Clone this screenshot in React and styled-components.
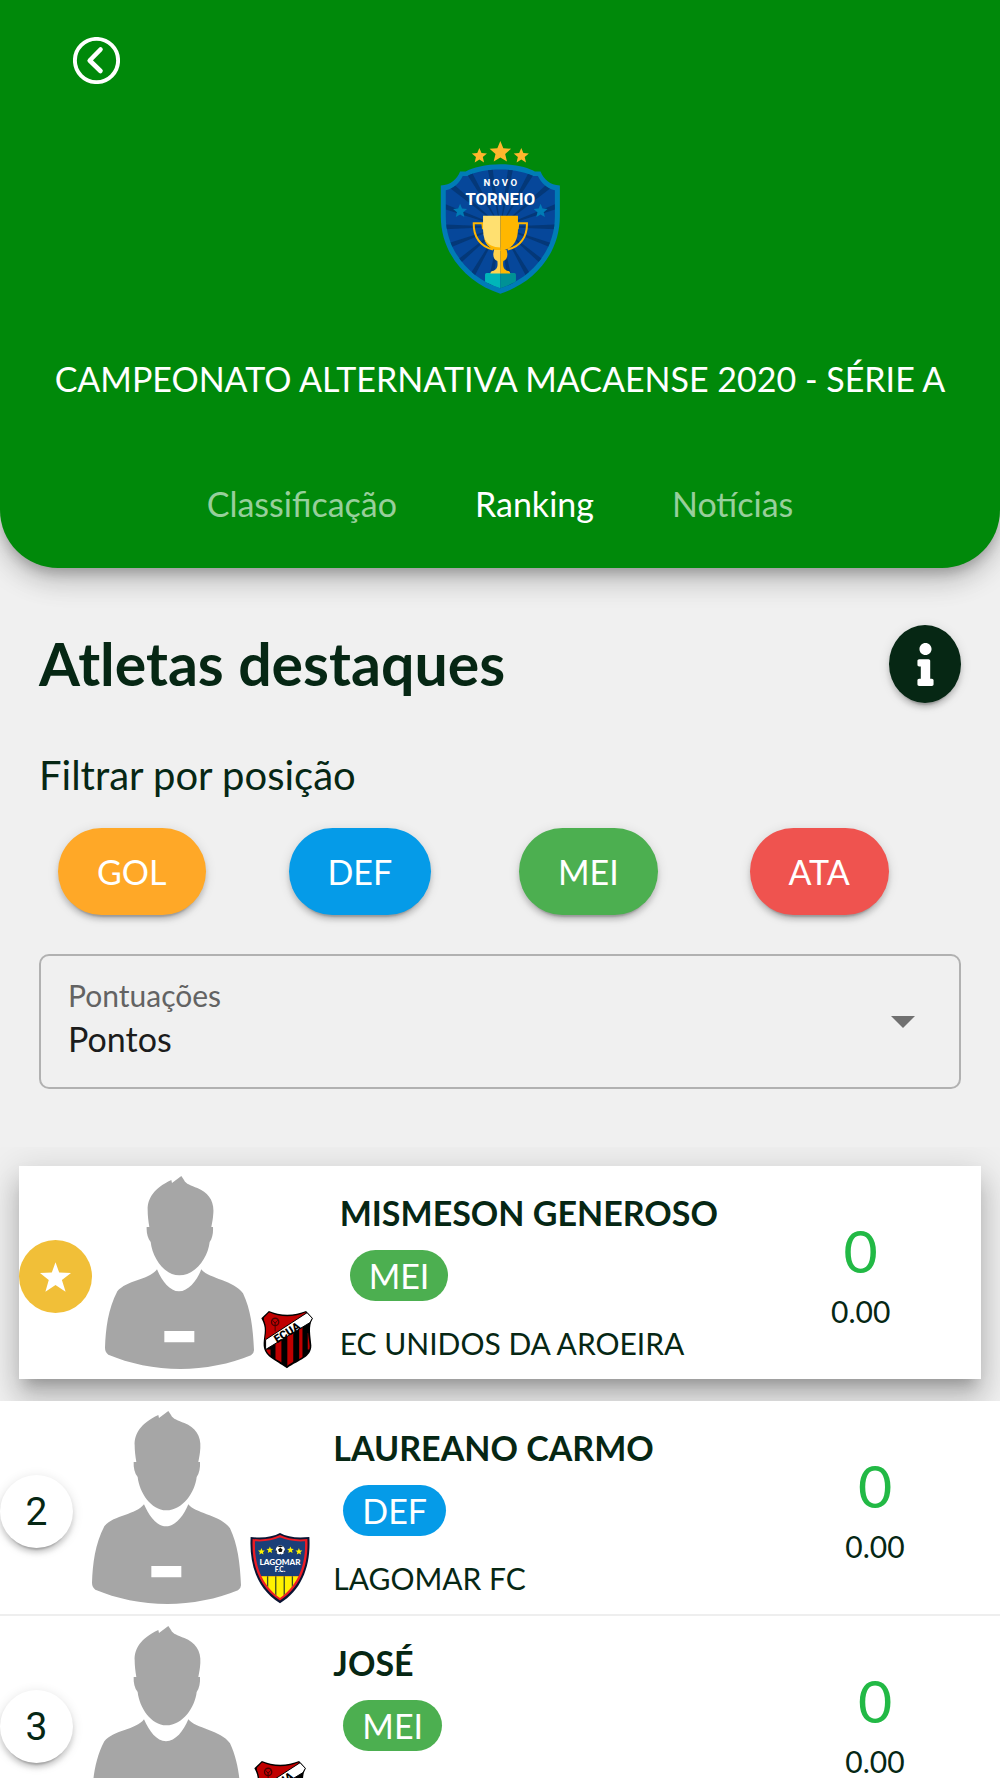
import { useState } from "react";
import styled, { createGlobalStyle } from "styled-components";
import { FaInfo } from "react-icons/fa";

const GlobalStyle = createGlobalStyle`
    * {
        box-sizing: border-box;
    }

    body {
        margin: 0;
        background-color: #f0f0f0;
        color: #062714;
        font-family: Lato, "Open Sans", sans-serif;
        overflow-x: hidden;
    }

    button, select {
        font-family: inherit;
    }
`

const positionColors = {
    GOL: "#ffa827",
    DEF: "#059be8",
    MEI: "#4caf50",
    ATA: "#ef534f",
};

const Header = styled.header`
    display: flex;
    flex-direction: column;
    align-items: center;
    padding: 37px 24px 43px;
    background-color: #00890a;
    color: #fff;
    border-radius: 0 0 58px 58px;
    box-shadow: 0 7px 12px -2px rgba(0, 0, 0, .2), 0 15px 24px rgba(0, 0, 0, .14), 0 2px 44px rgba(0, 0, 0, .12);
`

const BackButton = styled.button`
    align-self: flex-start;
    display: flex;
    margin: 0 0 57px 49px;
    padding: 0;
    border: 0;
    background: none;
    color: inherit;
    cursor: pointer;
`

const Championship = styled.h1`
    margin: 64px 0 83px;
    font-size: 34px;
    line-height: 42px;
    font-weight: normal;
    text-align: center;
`

const Tabs = styled.nav`
    display: flex;
    gap: 78px;
`

const Tab = styled.a`
    font-size: 34px;
    line-height: 42px;
    text-decoration: none;
    color: ${props => props.$active ? "#fff" : "rgba(255, 255, 255, .6)"};
`

const Filters = styled.section`
    padding: 57px 39px 58px;
`

const TitleRow = styled.div`
    display: flex;
    align-items: center;
    justify-content: space-between;
`

const Title = styled.h2`
    margin: 0;
    font-size: 59px;
    line-height: 78px;
`

const InfoButton = styled.button`
    display: flex;
    align-items: center;
    justify-content: center;
    width: 72px;
    height: 78px;
    padding: 0;
    border: 0;
    border-radius: 50%;
    background-color: #062714;
    color: #fff;
    box-shadow: 0 7px 2px -5px rgba(0, 0, 0, .2), 0 5px 5px rgba(0, 0, 0, .14), 0 2px 12px rgba(0, 0, 0, .12);
    cursor: pointer;
`

const Subtitle = styled.h3`
    margin: 48px 0 28px;
    font-size: 40px;
    line-height: 49px;
    font-weight: normal;
`

const Positions = styled.div`
    display: grid;
    grid-template-columns: repeat(4, 1fr);
    justify-items: start;
`

const PositionButton = styled.button`
    height: 87px;
    margin-left: 19px;
    padding: 0 39px;
    border: 0;
    border-radius: 44px;
    background-color: ${props => positionColors[props.$position]};
    color: #fff;
    font-size: 34px;
    box-shadow: 0 7px 2px -5px rgba(0, 0, 0, .2), 0 5px 5px rgba(0, 0, 0, .14), 0 2px 12px rgba(0, 0, 0, .12);
    cursor: pointer;
`

const SelectBox = styled.div`
    display: grid;
    grid-template-columns: 1fr auto;
    align-items: center;
    height: 135px;
    margin-top: 39px;
    padding: 0 44px 0 27px;
    border: 2px solid #b1b1b1;
    border-radius: 10px;
`

const SelectField = styled.div`
    padding-bottom: 2px;
`

const SelectLabel = styled.label`
    display: block;
    color: #636363;
    font-size: 30px;
    line-height: 36px;
`

const Select = styled.select`
    width: 100%;
    height: 52px;
    padding: 0;
    border: 0;
    outline: 0;
    appearance: none;
    background: none;
    color: #1c1c1c;
    font-size: 34px;
`

const Ranking = styled.ol`
    margin: 0;
    padding: 19px 0 0;
    list-style: none;
    overflow: hidden;
`

const Row = styled.li`
    display: grid;
    grid-template-columns: 4fr 5fr 3fr;
    margin: ${props => props.$first ? "0 19px 22px" : "0"};
    background-color: #fff;
    border-bottom: ${props => props.$first ? "0" : "2px solid #eee"};
    box-shadow: ${props => props.$first
        ? "0 12px 12px -7px rgba(0, 0, 0, .2), 0 20px 24px 2px rgba(0, 0, 0, .14), 0 7px 34px 5px rgba(0, 0, 0, .12)"
        : "none"};
    position: relative;
    z-index: ${props => props.$first ? 0 : 1};
`

const Player = styled.div`
    display: grid;
    grid-template-columns: minmax(0, 1fr) auto minmax(0, 1fr);
    align-items: center;
    padding: 10px 0;
`

const Rank = styled.span`
    display: flex;
    align-items: center;
    justify-content: center;
    width: 73px;
    height: 73px;
    margin-top: 8px;
    border-radius: 50%;
    background-color: ${props => props.$first ? "#f1bf38" : "#fff"};
    box-shadow: ${props => props.$first
        ? "none"
        : "0 7px 2px -5px rgba(0, 0, 0, .2), 0 5px 5px rgba(0, 0, 0, .14), 0 2px 12px rgba(0, 0, 0, .12)"};
    font-family: Roboto, sans-serif;
    font-size: 39px;
`

const Crest = styled.div`
    display: flex;
    justify-content: center;
    justify-self: end;
    align-self: end;
    width: 60px;
    margin-right: 23px;
`

const Info = styled.div`
    display: flex;
    flex-direction: column;
    align-items: flex-start;
    padding-top: 26px;
`

const Name = styled.strong`
    font-size: 34px;
    line-height: 42px;
`

const Chip = styled.span`
    height: 51px;
    margin: 16px 0 24px 10px;
    padding: 0 19px;
    border-radius: 29px;
    background-color: ${props => positionColors[props.$position]};
    color: #fff;
    font-size: 34px;
    line-height: 51px;
`

const Club = styled.span`
    font-size: 30px;
    line-height: 36px;
`

const Points = styled.div`
    display: flex;
    flex-direction: column;
    align-items: center;
    padding-top: 49px;
`

const Total = styled.span`
    color: #22b945;
    font-size: 59px;
    line-height: 71px;
`

const Average = styled.span`
    margin-top: 7px;
    font-size: 30px;
    line-height: 37px;
`

const starPoints = (cx, cy, r) =>
    Array.from({ length: 10 }, (_, i) => {
        const radius = i % 2 ? r * 0.45 : r;
        const angle = (Math.PI / 5) * i - Math.PI / 2;
        return `${cx + radius * Math.cos(angle)},${cy + radius * Math.sin(angle)}`;
    }).join(" ");

const BackIcon = () => (
    <svg width="47" height="47" viewBox="0 0 47 47" fill="none" stroke="currentColor">
        <circle cx="23.5" cy="23.5" r="21.6" strokeWidth="3.9" />
        <path d="M27.5 12.5 16.7 23.5 27.5 34" strokeWidth="4.6" strokeLinecap="round" strokeLinejoin="round" />
    </svg>
);

const shield = "M241 102C285 102 325 112 345 124H362C372 148 390 165 420 166V258C420 372 340 460 241 491C142 460 62 372 62 258V166C92 165 110 148 120 124H137C157 112 197 102 241 102Z";
const shieldInner = "M241 118C282 118 318 126 340 137H354C364 158 382 176 405 180V258C405 362 334 444 241 475C148 444 77 362 77 258V180C100 176 118 158 128 137H142C164 126 200 118 241 118Z";

const TournamentLogo = () => (
    <svg width="120" height="153" viewBox="60 32 360 460" role="img" aria-label="Novo Torneio">
        <defs>
            <clipPath id="shieldInner">
                <path d={shieldInner} />
            </clipPath>
        </defs>
        <polygon points={starPoints(178, 77, 24)} fill="#ffb62d" />
        <polygon points={starPoints(241, 66, 34)} fill="#ffb62d" />
        <polygon points={starPoints(304, 77, 24)} fill="#ffb62d" />
        <path d={shield} fill="#007cb6" />
        <path d={shieldInner} fill="#06479a" />
        <g clipPath="url(#shieldInner)" fill="#043878">
            {Array.from({ length: 18 }, (_, i) => (
                <polygon key={i} points="241,290 230,30 252,30" transform={`rotate(${i * 20 + 10} 241 290)`} />
            ))}
            <path d="M195 434Q195 429 200 429H241V491L195 470Z" fill="#00b5b9" />
            <path d="M241 429H283Q288 429 288 434V470L241 491Z" fill="#009195" />
        </g>
        <polygon points={starPoints(120, 243, 22)} fill="#007cb6" />
        <polygon points={starPoints(362, 243, 22)} fill="#007cb6" />
        <g fill="none" stroke="#ffb700" strokeWidth="6">
            <path d="M192 279H161C160 320 181 350 219 358" />
            <path d="M290 279H321C322 320 301 350 263 358" />
        </g>
        <path d="M184 279H192V297H186ZM290 279H298L296 297H290Z" fill="#ffb700" />
        <path d="M189 257H241V362C213 361 189 340 189 298Z" fill="#ffe070" />
        <path d="M241 257H294V298C294 340 268 362 241 362Z" fill="#ffb700" />
        <path d="M192 324C204 346 220 352 241 352V362C214 362 197 346 192 324Z" fill="#ffb700" />
        <path d="M222 360H241V430H211Q211 424 217 423C232 419 234 408 232 393C222 390 219 380 220 370Z" fill="#ffd34d" />
        <path d="M241 360H260L262 370C263 380 260 390 250 393C248 408 250 419 265 423Q271 424 271 430H241Z" fill="#ffb700" />
        <text x="241" y="168" fill="#fff" fontFamily="Roboto, sans-serif" fontSize="29" fontWeight="700" textAnchor="middle">N O V O</text>
        <text x="241" y="224" fill="#fff" fontFamily="Roboto, sans-serif" fontSize="50" fontWeight="700" textAnchor="middle">TORNEIO</text>
    </svg>
);

const Silhouette = () => (
    <svg width="149" height="193" viewBox="313 81 447 579" fill="#a6a6a6">
        <path d="M441 184C440 150 458 118 512 93L514 102L542 81L550 93C555 105 572 110 590 117C622 130 641 155 638 192C637 210 634 222 632 234H637C638 252 635 268 627 279C622 325 585 379 536 379C490 379 455 325 450 279C441 268 437 252 438 234H446C443 216 441 200 441 184Z" />
        <path fillRule="evenodd" d="M469 361C484 396 507 427 535 427C563 427 588 396 602 361C622 388 700 394 727 433C750 482 757 535 760 604Q760 613 751 619C690 645 610 660 540 660C462 660 385 643 323 617Q313 609 313 596C315 540 322 480 350 427C378 393 445 393 469 361ZM491 546V580H581V546Z" />
    </svg>
);

const EcuaCrest = () => (
    <svg width="52" height="59" viewBox="783 481 158 177" role="img" aria-label="EC Unidos da Aroeira">
        <defs>
            <clipPath id="ecuaField">
                <path d="M808 487C840 503 885 503 918 487L935 508C918 540 930 565 931 590C930 625 895 625 862 650C832 626 794 622 795 580C797 550 804 535 790 506Z" />
            </clipPath>
        </defs>
        <path d="M807 483C840 498 885 498 920 483L940 506C926 530 934 560 936 588C936 625 900 630 862 657C826 630 789 622 791 580C793 550 801 535 784 505Z" fill="#000" />
        <g clipPath="url(#ecuaField)">
            <path d="M790 480H935L795 580Z" fill="#c00000" />
            <path d="M797 600H812V640H797ZM827 570H845V645H827ZM863 550H881V655H863ZM899 530H909V640H899ZM925 550H935V600H925Z" fill="#c00000" />
        </g>
        <path d="M808 492C840 506 885 506 915 490L797 565C799 545 803 525 792 506Z" fill="#c00000" />
        <circle cx="826" cy="516" r="11" fill="none" stroke="#4a0000" strokeWidth="4" />
        <path d="M818 511 826 520 834 511M826 516V545" fill="none" stroke="#4a0000" strokeWidth="3" />
        <path d="M797 570 923 488 939 505 932 518 797 600Z" fill="#fff" stroke="#000" strokeWidth="3" />
        <text x="862" y="560" fill="#000" fontFamily="Roboto, sans-serif" fontSize="34" fontWeight="900" textAnchor="middle" transform="rotate(-32 862 548)">ECUA</text>
    </svg>
);

const LagomarCrest = () => (
    <svg width="60" height="72" viewBox="745 424 184 218" role="img" aria-label="Lagomar FC">
        <defs>
            <clipPath id="lagomarField">
                <path d="M760 451C790 453 815 448 837 439C859 448 884 453 914 451C916 520 895 585 837 625C779 585 758 520 760 451Z" />
            </clipPath>
        </defs>
        <path d="M747 438C785 442 815 438 837 426C859 438 889 442 927 438C932 525 905 600 837 641C769 600 742 525 747 438Z" fill="#0a1433" />
        <path d="M753 444C788 448 815 443 837 432C859 443 886 448 921 444C925 525 900 592 837 633C774 592 749 525 753 444Z" fill="#ee1c25" />
        <g clipPath="url(#lagomarField)">
            <path d="M750 430H925V558H750Z" fill="#1b3f78" />
            <path d="M750 558H925V635H750Z" fill="#fff100" />
            <path d="M799 558V610M824 558V635M850 558V635M875 558V610" stroke="#3c4a23" strokeWidth="4" />
        </g>
        <polygon points={starPoints(780, 483, 11)} fill="#fff100" />
        <polygon points={starPoints(806, 478, 11)} fill="#fff100" />
        <polygon points={starPoints(869, 478, 11)} fill="#fff100" />
        <polygon points={starPoints(895, 483, 11)} fill="#fff100" />
        <circle cx="838" cy="478" r="14" fill="#fff" />
        <path d="M838 471 845 476 842 484H834L831 476ZM829 467 838 464 847 467 838 469ZM825 477 829 487 824 484ZM851 477 847 487 852 484ZM834 492 838 489 842 492Z" fill="#111" />
        <text x="837" y="523" fill="#fff" fontFamily="Lato, sans-serif" fontSize="25" fontWeight="900" textAnchor="middle">LAGOMAR</text>
        <text x="837" y="546" fill="#fff" fontFamily="Lato, sans-serif" fontSize="20" fontWeight="900" textAnchor="middle">F.C.</text>
    </svg>
);

const StarIcon = () => (
    <svg width="31" height="30" viewBox="121 333 92 88" fill="#fff">
        <path d="M167 333 178 364 213 365 186 386 197 421 167 401 137 421 147 386 121 365 156 364Z" />
    </svg>
);

const players = [
    { name: "MISMESON GENEROSO", position: "MEI", club: "EC UNIDOS DA AROEIRA", crest: EcuaCrest, points: 0, average: "0.00" },
    { name: "LAUREANO CARMO", position: "DEF", club: "LAGOMAR FC", crest: LagomarCrest, points: 0, average: "0.00" },
    { name: "JOSÉ", position: "MEI", club: "EC UNIDOS DA AROEIRA", crest: EcuaCrest, points: 0, average: "0.00" },
];

const PlayerRow = ({ rank, player }) => {
    const ClubCrest = player.crest;
    const first = rank === 1;

    return (
        <Row $first={first}>
            <Player>
                <Rank $first={first}>{first ? <StarIcon /> : rank}</Rank>
                <Silhouette />
                <Crest>
                    <ClubCrest />
                </Crest>
            </Player>
            <Info>
                <Name>{player.name}</Name>
                <Chip $position={player.position}>{player.position}</Chip>
                <Club>{player.club}</Club>
            </Info>
            <Points>
                <Total>{player.points}</Total>
                <Average>{player.average}</Average>
            </Points>
        </Row>
    );
}

const App = () => {
    const [score, setScore] = useState("pontos");

    return (
        <>
            <GlobalStyle />
            <Header>
                <BackButton aria-label="Voltar">
                    <BackIcon />
                </BackButton>
                <TournamentLogo />
                <Championship>CAMPEONATO ALTERNATIVA MACAENSE 2020 - SÉRIE A</Championship>
                <Tabs>
                    <Tab href="#classificacao">Classificação</Tab>
                    <Tab href="#ranking" $active>Ranking</Tab>
                    <Tab href="#noticias">Notícias</Tab>
                </Tabs>
            </Header>
            <main>
                <Filters>
                    <TitleRow>
                        <Title>Atletas destaques</Title>
                        <InfoButton aria-label="Informações">
                            <FaInfo size={43} />
                        </InfoButton>
                    </TitleRow>
                    <Subtitle>Filtrar por posição</Subtitle>
                    <Positions>
                        {Object.keys(positionColors).map(position => (
                            <PositionButton key={position} $position={position}>{position}</PositionButton>
                        ))}
                    </Positions>
                    <SelectBox>
                        <SelectField>
                            <SelectLabel htmlFor="score">Pontuações</SelectLabel>
                            <Select id="score" value={score} onChange={e => setScore(e.target.value)}>
                                <option value="pontos">Pontos</option>
                            </Select>
                        </SelectField>
                        <svg width="24" height="12" viewBox="0 0 24 12" fill="#707070">
                            <path d="M0 0H24L12 12Z" />
                        </svg>
                    </SelectBox>
                </Filters>
                <Ranking>
                    {players.map((player, i) => (
                        <PlayerRow key={player.name} rank={i + 1} player={player} />
                    ))}
                </Ranking>
            </main>
        </>
    );
}

export default App;
